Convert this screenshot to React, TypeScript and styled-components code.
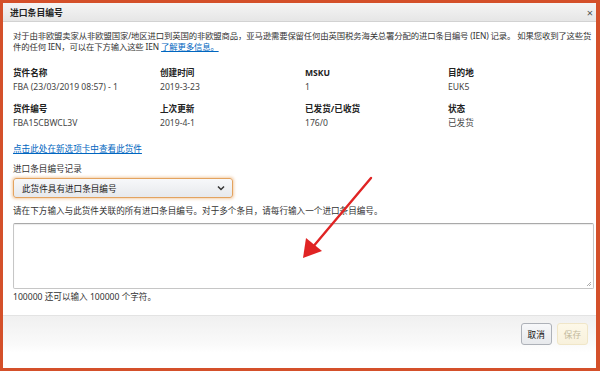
import React from "react";
import styled, { createGlobalStyle } from "styled-components";

const Global = createGlobalStyle`
  html, body { margin: 0; padding: 0; background: #fff; }
  body { font-family: "Noto Sans", "Noto Sans CJK SC", sans-serif; }
  * { box-sizing: border-box; }
`;

const Frame = styled.div`
  position: relative;
  width: 600px;
  height: 371px;
  border-style: solid;
  border-color: #d4502a;
  border-width: 3px 4px 3px 3px;
  background: #fff;
  display: flex;
  flex-direction: column;
  color: #333;
  font-size: 8.6px;
  overflow: hidden;
`;

const Header = styled.div`
  height: 19px;
  flex: none;
  display: flex;
  align-items: center;
  justify-content: space-between;
  padding: 0 3px 0 7px;
  background: linear-gradient(#f5f5f5, #e6e6e6);
  border-bottom: 1px solid #d2d2d2;
  font-weight: 700;
  font-size: 8.8px;
  color: #222;
`;

const Close = styled.span`
  font-size: 11px;
  color: #555;
  font-weight: 400;
  line-height: 1;
`;

const Body = styled.div`
  padding: 8px 0 0 10px;
  display: flex;
  flex-direction: column;
  flex: 1;
`;

const Intro = styled.p`
  margin: 0;
  line-height: 11px;
  width: 580px;
  font-size: 8.4px;
  letter-spacing: -0.15px;
`;

const Link = styled.a`
  color: #0066c0;
  text-decoration: underline;
  cursor: pointer;
`;

const Grid = styled.div`
  display: grid;
  grid-template-columns: 147px 145px 143px 1fr;
  row-gap: 11px;
  margin-top: 16px;
`;

const Field = styled.div`
  display: flex;
  flex-direction: column;
  gap: 3px;
  line-height: 11px;
`;

const Label = styled.span`
  font-weight: 700;
  color: #222;
`;

const Value = styled.span`
  color: #444;
`;

const ViewLink = styled(Link)`
  margin-top: 15px;
  line-height: 11px;
`;

const FieldLabel = styled.div`
  margin-top: 9px;
  line-height: 11px;
`;

const Select = styled.div`
  margin-top: 3px;
  width: 220px;
  height: 20px;
  border: 1px solid #e3a35f;
  border-radius: 3px;
  box-shadow: 0 0 3px 1px rgba(228, 145, 60, 0.45);
  background: linear-gradient(#f7f8fa, #e7e9ec);
  display: flex;
  align-items: center;
  justify-content: space-between;
  padding: 0 7px 0 8px;
  color: #222;
`;

const Hint = styled.div`
  margin-top: 8px;
  line-height: 11px;
`;

const TextArea = styled.div`
  position: relative;
  margin-top: 6px;
  width: 581px;
  height: 66px;
  border: 1px solid #c6c6c6;
  border-top-color: #a9a9a9;
  border-radius: 2px;
  box-shadow: inset 0 1px 1px rgba(0, 0, 0, 0.08);
`;

const Grip = styled.svg`
  position: absolute;
  right: 1px;
  bottom: 1px;
`;

const Counter = styled.div`
  margin-top: 3px;
  line-height: 11px;
`;

const Footer = styled.div`
  margin-top: 12px;
  margin-left: -10px;
  height: 53px;
  border-top: 1px solid #e3e3e3;
  background: linear-gradient(#f0f0f0, #fafafa 55%, #fff 70%);
  display: flex;
  justify-content: flex-end;
  align-items: flex-start;
  gap: 5px;
  padding: 7px 8px 0 0;
`;

const Button = styled.button<{ $disabled?: boolean }>`
  height: 22px;
  padding: 0 6px;
  font-family: inherit;
  font-size: 8.6px;
  border-radius: 3px;
  border: 1px solid ${(p) => (p.$disabled ? "#f0e6c8" : "#adb1b8")};
  background: ${(p) =>
    p.$disabled ? "linear-gradient(#fdf8e8, #f8f1dc)" : "linear-gradient(#f7f8fa, #e7e9ec)"};
  color: ${(p) => (p.$disabled ? "#c2b99c" : "#111")};
`;

const Arrow = styled.svg`
  position: absolute;
  left: -3px;
  top: -3px;
  pointer-events: none;
`;

export default function App() {
  return (
    <>
      <Global />
      <Frame>
        <Header>
          <span>进口条目编号</span>
          <Close>×</Close>
        </Header>
        <Body>
          <Intro>
            对于由非欧盟卖家从非欧盟国家/地区进口到英国的非欧盟商品，亚马逊需要保留任何由英国税务海关总署分配的进口条目编号 (IEN) 记录。 如果您收到了这些货件的任何 IEN，可以在下方输入这些 IEN <Link>了解更多信息。</Link>
          </Intro>
          <Grid>
            <Field><Label>货件名称</Label><Value>FBA (23/03/2019 08:57) - 1</Value></Field>
            <Field><Label>创建时间</Label><Value>2019-3-23</Value></Field>
            <Field><Label>MSKU</Label><Value>1</Value></Field>
            <Field><Label>目的地</Label><Value>EUK5</Value></Field>
            <Field><Label>货件编号</Label><Value>FBA15CBWCL3V</Value></Field>
            <Field><Label>上次更新</Label><Value>2019-4-1</Value></Field>
            <Field><Label>已发货/已收货</Label><Value>176/0</Value></Field>
            <Field><Label>状态</Label><Value>已发货</Value></Field>
          </Grid>
          <ViewLink>点击此处在新选项卡中查看此货件</ViewLink>
          <FieldLabel>进口条目编号记录</FieldLabel>
          <Select>
            <span>此货件具有进口条目编号</span>
            <svg width="8" height="6" viewBox="0 0 8 6">
              <path d="M1 1.5 L4 4.5 L7 1.5" fill="none" stroke="#333" strokeWidth="1.5" />
            </svg>
          </Select>
          <Hint>请在下方输入与此货件关联的所有进口条目编号。对于多个条目，请每行输入一个进口条目编号。</Hint>
          <TextArea>
            <Grip width="6" height="6" viewBox="0 0 6 6">
              <path d="M5 1 L1 5 M5 3 L3 5" stroke="#999" strokeWidth="0.8" />
            </Grip>
          </TextArea>
          <Counter>100000 还可以输入 100000 个字符。</Counter>
          <Footer>
            <Button>取消</Button>
            <Button $disabled>保存</Button>
          </Footer>
        </Body>
        <Arrow width="600" height="371" viewBox="0 0 600 371">
          <line x1="371" y1="178" x2="312" y2="248" stroke="#e02424" strokeWidth="2.4" strokeLinecap="round" />
          <polygon points="303,258 306,238 322,251" fill="#e02424" />
        </Arrow>
      </Frame>
    </>
  );
}
